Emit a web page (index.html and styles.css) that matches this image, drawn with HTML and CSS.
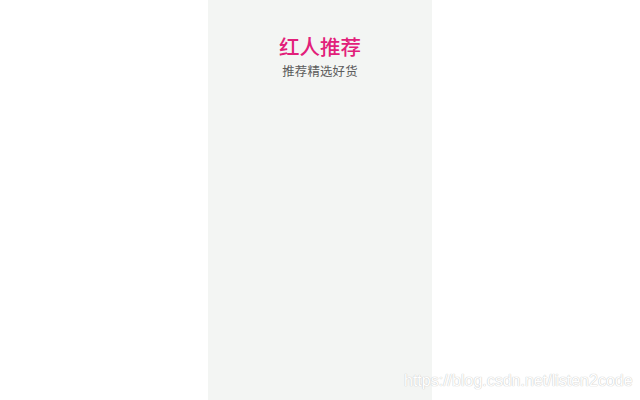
FILE: index.html
```html
<!DOCTYPE html>
<html lang="zh">
<head>
<meta charset="utf-8">
<link rel="stylesheet" href="styles.css">
</head>
<body>
<div class="page">
  <div class="panel">
    <div class="title">红人推荐</div>
    <div class="subtitle">推荐精选好货</div>
  </div>
</div>
<div class="watermark">https://blog.csdn.net/listen2code</div>
</body>
</html>
```
FILE: styles.css
```css
html, body {
  margin: 0;
  padding: 0;
  background: #ffffff;
  width: 640px;
  height: 400px;
  overflow: hidden;
}
.page {
  display: flex;
  justify-content: center;
  height: 400px;
}
.panel {
  width: 224px;
  height: 400px;
  background: #f3f5f3;
  display: flex;
  flex-direction: column;
  align-items: center;
  padding-top: 32px;
  box-sizing: border-box;
  font-family: "Noto Sans CJK SC", "Noto Sans", sans-serif;
}
.title {
  font-size: 20.5px;
  line-height: 28px;
  color: #e2207a;
  font-weight: 500;
}
.subtitle {
  margin-top: 3px;
  font-size: 12.4px;
  line-height: 16px;
  color: #5c5c5c;
  letter-spacing: 0.2px;
}
.watermark {
  position: absolute;
  left: 404px;
  top: 371px;
  font-family: "Liberation Sans", Arial, sans-serif;
  font-size: 16px;
  line-height: 20px;
  color: #ffffff;
  text-shadow: 0 0 1px #c8c8c8, 0 0 1px #c8c8c8;
}
```
